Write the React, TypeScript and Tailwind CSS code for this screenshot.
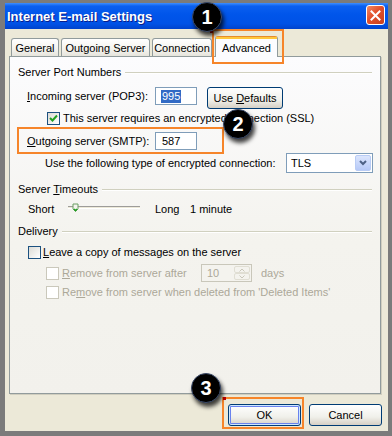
import React from "react";

const Check = () => (
  <svg width="9" height="9" viewBox="0 0 9 9" className="block">
    <path d="M1 4 L3.5 6.5 L8 1.5" stroke="#21A121" strokeWidth="2" fill="none" />
  </svg>
);

function Checkbox({ checked, disabled }: { checked?: boolean; disabled?: boolean }) {
  return (
    <div
      className={
        disabled
          ? "w-[13px] h-[13px] border border-[#CAC8BB] bg-white flex items-center justify-center shrink-0"
          : "w-[13px] h-[13px] border border-[#1C5180] bg-[linear-gradient(135deg,#DCDBD5,#FFFFFF)] flex items-center justify-center shrink-0"
      }
    >
      {checked ? <Check /> : null}
    </div>
  );
}

function GroupHeader({ children }: { children: React.ReactNode }) {
  return (
    <div className="flex items-center h-[13px] pl-[8px] pr-[8px]">
      <span className="whitespace-nowrap">{children}</span>
      <div className="flex-1 ml-[4px] h-[2px] border-t border-[#D0D0BF] border-b-white border-b" />
    </div>
  );
}

const Badge = ({ n, left, top }: { n: string; left: number; top: number }) => (
  <div
    className="absolute w-[30px] h-[30px] rounded-full bg-black flex items-center justify-center text-white font-bold text-[20px] font-['Liberation_Sans',Arial,sans-serif] shadow-[2px_4px_4px_rgba(0,0,0,0.75)] border border-[#3a4a6a]"
    style={{ left, top }}
  >
    {n}
  </div>
);

function XPButton({ label, def, w }: { label: React.ReactNode; def?: boolean; w: string }) {
  return (
    <div
      className={
        "h-[22px] rounded-[3px] border border-[#003C74] bg-[linear-gradient(to_bottom,#FFFFFF,#F0F0EA_60%,#D6D0C5)] flex items-center justify-center text-black " +
        w +
        (def ? " shadow-[inset_0_0_0_1px_#CEE7FF,inset_0_0_0_2px_#6982EE]" : "")
      }
    >
      {label}
    </div>
  );
}

export default function App() {
  return (
    <div className="w-[392px] h-[436px] bg-[#7b7b7b] pt-[3px] pl-[5px] relative overflow-hidden font-['Liberation_Sans',Arial,sans-serif] text-[11px] text-black leading-[13px]">
      <div className="w-[383px] h-[428px] flex flex-col bg-[#ECE9D8]">
        {/* Title bar */}
        <div className="h-[26px] flex items-start justify-between bg-[linear-gradient(to_bottom,#3D8EFF_0%,#0A5FF0_12%,#0055EA_45%,#0052E6_80%,#0043CC_100%)]">
          <div className="pl-[2px] pt-[6px] text-white font-bold text-[13px] leading-[15px] [text-shadow:1px_1px_0_#0A1E8A]">
            Internet E-mail Settings
          </div>
          <div className="mt-[2px] mr-[3px] w-[19px] h-[20px] rounded-[3px] border border-white bg-[linear-gradient(135deg,#F08A66,#E2502B_45%,#C8401E)] flex items-center justify-center">
            <svg width="11" height="11" viewBox="0 0 11 11">
              <path d="M1.5 1.5 L9.5 9.5 M9.5 1.5 L1.5 9.5" stroke="white" strokeWidth="2" strokeLinecap="square" />
            </svg>
          </div>
        </div>

        {/* Body */}
        <div className="flex-1 flex flex-col pt-[7px]">
          {/* Tabs */}
          <div className="flex items-end h-[20px] pl-[6px] relative z-10">
            <div className="w-[48px] h-[18px] border border-b-0 border-[#919B9C] rounded-t-[3px] bg-[linear-gradient(to_bottom,#FFFFFF,#F4F3EE_60%,#E6E4DC)] flex items-center justify-center pt-[1px]">
              General
            </div>
            <div className="ml-[2px] w-[89px] h-[18px] border border-b-0 border-[#919B9C] rounded-t-[3px] bg-[linear-gradient(to_bottom,#FFFFFF,#F4F3EE_60%,#E6E4DC)] flex items-center justify-center pt-[1px]">
              Outgoing Server
            </div>
            <div className="ml-[2px] w-[60px] h-[18px] border border-b-0 border-[#919B9C] rounded-t-[3px] bg-[linear-gradient(to_bottom,#FFFFFF,#F4F3EE_60%,#E6E4DC)] flex items-center justify-center pt-[1px]">
              Connection
            </div>
            <div className="ml-[3px] w-[63px] h-[21px] -mb-px border border-b-0 border-[#919B9C] border-t-[#E68B2C] rounded-t-[3px] bg-[#FCFCFE] flex flex-col">
              <div className="h-[2px] bg-[#FFC73C]" />
              <div className="flex-1 flex items-center justify-center">Advanced</div>
            </div>
          </div>

          {/* Panel */}
          <div className="ml-[4px] w-[372px] h-[338px] border border-[#919B9C] bg-[linear-gradient(to_bottom,#FCFCFE,#F4F3EE_55%,#F2F1EC)] shadow-[1px_1px_0_#D0CEBF] flex flex-col">
            <div className="mt-[9px]">
              <GroupHeader>Server Port Numbers</GroupHeader>
            </div>

            {/* Incoming */}
            <div className="mt-[8px] h-[19px] flex items-start pl-[17px]">
              <div className="w-[128px] h-[18px] flex items-center">
                <span>
                  <u>I</u>ncoming server (POP3):
                </span>
              </div>
              <div className="w-[42px] h-[18px] border border-[#7F9DB9] bg-white flex items-center pl-[5px]">
                <span className="bg-[#316AC5] text-white px-px">995</span>
              </div>
              <div className="ml-[10px]">
                <XPButton
                  w="w-[76px] h-[19px]"
                  label={
                    <span>
                      Use <u>D</u>efaults
                    </span>
                  }
                />
              </div>
            </div>

            {/* SSL checkbox */}
            <div className="mt-[6px] h-[13px] flex items-center pl-[37px]">
              <Checkbox checked />
              <span className="ml-[3px] whitespace-nowrap">This server requires an encrypted connection (SSL)</span>
            </div>

            {/* Outgoing */}
            <div className="mt-[7px] h-[18px] flex items-center pl-[17px]">
              <div className="w-[128px] flex items-center">
                <span>
                  <u>O</u>utgoing server (SMTP):
                </span>
              </div>
              <div className="w-[42px] h-[18px] border border-[#7F9DB9] bg-white flex items-center pl-[6px]">
                587
              </div>
            </div>

            {/* Encryption type */}
            <div className="mt-[3px] h-[20px] flex items-center pl-[35px]">
              <div className="w-[241px] whitespace-nowrap">Use the following type of encrypted connection:</div>
              <div className="w-[87px] h-[20px] border border-[#7F9DB9] bg-white flex items-center justify-between pl-[4px] pr-px">
                <span>TLS</span>
                <div className="w-[16px] h-[16px] rounded-[2px] border border-[#B9CCF5] bg-[linear-gradient(to_bottom,#DCE6FD,#B6C9F7)] flex items-center justify-center">
                  <svg width="8" height="6" viewBox="0 0 8 6">
                    <path d="M1 1 L4 4 L7 1" stroke="#4D6185" strokeWidth="2" fill="none" />
                  </svg>
                </div>
              </div>
            </div>

            <div className="mt-[10px]">
              <GroupHeader>
                <span>
                  Server <u>T</u>imeouts
                </span>
              </GroupHeader>
            </div>

            {/* Slider */}
            <div className="mt-[7px] h-[13px] flex items-center pl-[18px]">
              <span className="w-[40px]">Short</span>
              <div className="relative w-[72px] h-[13px]">
                <div className="absolute left-0 right-0 top-[3px] h-[3px] border-t border-[#9D9C99] border-b border-b-white bg-[#ECE9D8]" />
                <svg className="absolute left-[4px] top-[0px]" width="8" height="10" viewBox="0 0 8 10">
                  <path d="M1 1 H6 V6 L3.5 8.5 L1 6 Z" fill="#F4F3EE" stroke="#6B9E62" strokeWidth="1" />
                  <path d="M2 6 L3.5 7.5 L5 6" stroke="#21A121" strokeWidth="1.5" fill="none" />
                </svg>
              </div>
              <span className="ml-[15px] w-[35px]">Long</span>
              <span>1 minute</span>
            </div>

            <div className="mt-[9px]">
              <GroupHeader>Delivery</GroupHeader>
            </div>

            {/* Leave copy */}
            <div className="mt-[8px] h-[13px] flex items-center pl-[18px]">
              <Checkbox />
              <span className="ml-[2px] whitespace-nowrap">
                <u>L</u>eave a copy of messages on the server
              </span>
            </div>

            {/* Remove after */}
            <div className="mt-[5px] h-[18px] flex items-center pl-[36px] text-[#ACA899]">
              <Checkbox disabled />
              <span className="ml-[3px] w-[139px] whitespace-nowrap">
                <u>R</u>emove from server after
              </span>
              <div className="w-[51px] h-[18px] border border-[#C9C7BA] bg-[#F4F3EE] flex items-center justify-between pl-[5px] pr-px">
                <span>10</span>
                <div className="w-[16px] h-[14px] flex flex-col gap-0">
                  <div className="flex-1 rounded-[2px] border border-[#E0DED3] bg-[#F4F3EE] flex items-center justify-center">
                    <svg width="6" height="4" viewBox="0 0 6 4">
                      <path d="M0.5 3.5 L3 1 L5.5 3.5" stroke="#C9C7BA" strokeWidth="1" fill="none" />
                    </svg>
                  </div>
                  <div className="flex-1 rounded-[2px] border border-[#E0DED3] bg-[#F4F3EE] flex items-center justify-center">
                    <svg width="6" height="4" viewBox="0 0 6 4">
                      <path d="M0.5 0.5 L3 3 L5.5 0.5" stroke="#C9C7BA" strokeWidth="1" fill="none" />
                    </svg>
                  </div>
                </div>
              </div>
              <span className="ml-[9px]">days</span>
            </div>

            {/* Remove when deleted */}
            <div className="mt-[4px] h-[13px] flex items-center pl-[36px] text-[#ACA899]">
              <Checkbox disabled />
              <span className="ml-[3px] whitespace-nowrap">
                Re<u>m</u>ove from server when deleted from 'Deleted Items'
              </span>
            </div>
          </div>

          {/* Buttons */}
          <div className="mt-[10px] flex justify-end pr-[6px] gap-[8px]">
            <XPButton w="w-[73px]" label="OK" def />
            <XPButton w="w-[73px]" label="Cancel" />
          </div>
        </div>
      </div>

      {/* Annotations */}
      <div className="absolute left-[212px] top-[29px] w-[72px] h-[35px] border-2 border-[#F6852A]" />
      <div className="absolute left-[17px] top-[127px] w-[207px] h-[27px] border-2 border-[#F6852A]" />
      <div className="absolute left-[222px] top-[397px] w-[82px] h-[32px] border-2 border-[#F6852A]" />
      <div className="absolute left-[210px] top-[30px] w-[3px] h-[3px] bg-[#C00000]" />
      <div className="absolute left-[223px] top-[397px] w-[3px] h-[3px] bg-[#C00000]" />
      <Badge n="1" left={192} top={2} />
      <Badge n="2" left={223} top={109} />
      <Badge n="3" left={191} top={373} />
    </div>
  );
}
